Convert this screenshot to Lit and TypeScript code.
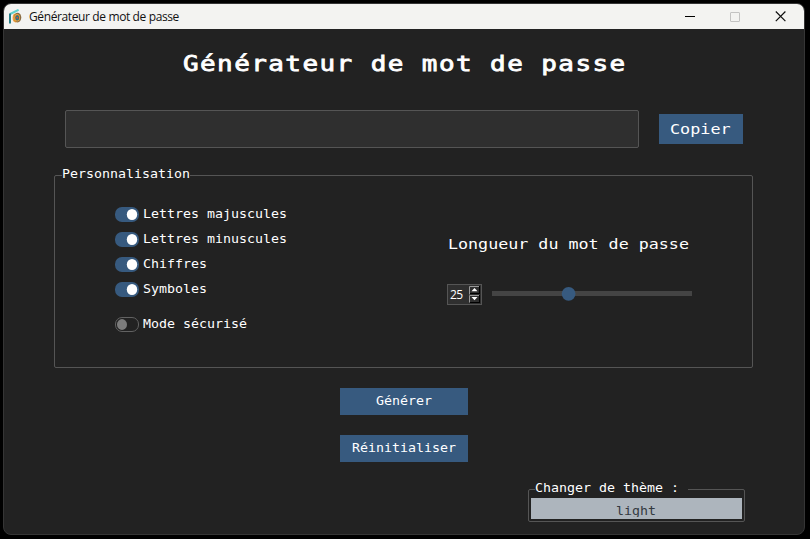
import { LitElement, html, css } from "lit";
import { customElement, property } from "lit/decorators.js";
import { styleMap } from "lit/directives/style-map.js";

const ADVANCE = 0.602;

/** One line of monospaced text with a chosen glyph size, column pitch and glyph stretch. */
@customElement("mono-text")
class MonoText extends LitElement {
  @property() text = "";
  @property({ type: Number }) size = 12.8;
  @property({ type: Number }) pitch = 8;
  @property({ type: Number }) stretch = 0;

  static styles = css`
    :host { display: block; flex: none; }
    .box { height: 20px; line-height: 20px; }
    .glyphs {
      display: block; width: max-content; white-space: pre; transform-origin: 0 50%;
      font-family: "DejaVu Sans Mono", monospace; 
    }
  `;

  render() {
    const scale = this.stretch || this.pitch / (this.size * ADVANCE);
    const spacing = this.pitch / scale - this.size * ADVANCE;
    return html`<div class="box" style=${styleMap({ width: `${this.text.length * this.pitch}px` })}>
      <span class="glyphs" style=${styleMap({
        fontSize: `${this.size}px`,
        letterSpacing: `${spacing}px`,
        transform: `scaleX(${scale})`,
      })}>${this.text}</span>
    </div>`;
  }
}

@customElement("toggle-row")
class ToggleRow extends LitElement {
  @property() label = "";
  @property({ type: Boolean }) on = false;

  static styles = css`
    :host { display: flex; align-items: center; height: 15px; gap: 3.5px; }
    svg { display: block; flex: none; }
    mono-text { margin-top: -2px; }
  `;

  render() {
    return html`
      <svg width="24" height="15" viewBox="0 0 24 15">
        ${this.on
          ? html`<svg width="24" height="15"><rect width="24" height="15" rx="7" fill="#375a7f"/><ellipse cx="17" cy="7.5" rx="5.2" ry="5.6" fill="#fff"/></svg>`
          : html`<svg width="24" height="15"><rect x=".5" y=".5" width="23" height="14" rx="6.5" fill="#222" stroke="#626262"/><ellipse cx="7" cy="7.5" rx="5" ry="5.4" fill="#7c7c7c"/></svg>`}
      </svg>
      <mono-text text=${this.label}></mono-text>`;
  }
}

@customElement("app-root")
class AppRoot extends LitElement {
  static styles = css`
    :host { display: block; width: 810px; height: 539px; background: #000; overflow: hidden; }
    * { box-sizing: border-box; }
    svg { display: block; flex: none; }
    .desktop { height: 539px; padding: 3px 5px 4px 3px; }
    .window {
      display: flex; flex-direction: column; height: 532px; background: #222;
      border: 1px solid #353535; border-radius: 8px; overflow: hidden; color: #fff;
    }
    .bar { display: flex; align-items: center; height: 25px; flex: none; background: #f3f3f1; padding: 0 18px 0 5px; }
    .caption { margin-left: 5px; flex: 1; color: #111; font: 12px/24px "Open Sans", sans-serif; letter-spacing: -0.38px; white-space: nowrap; }
    .controls { display: flex; align-items: center; gap: 35px; }
    .content { display: flex; flex-direction: column; padding: 25px 51px 0 50px; }
    .title { align-self: center; -webkit-text-stroke: 0.8px #fff; margin-left: 2px; }
    .output { display: flex; align-items: center; height: 38px; margin: 36px 10px 0 11px; gap: 20px; }
    .field { width: 574px; height: 38px; background: #2f2f2f; border: 1px solid #555; border-radius: 2px; }
    .button { display: flex; justify-content: center; align-items: center; background: #375a7f; }
    .copy { width: 84px; height: 30px; }
    .copy mono-text { margin-right: 1px; }
    .frame { position: relative; border: 1px solid #555; border-radius: 2px; }
    .legend { position: absolute; left: 7px; background: #222; }
    .legend.main { top: -12px; }
    .options { display: flex; width: 699px; height: 193px; margin-top: 27px; padding-left: 60px; }
    .toggles { display: flex; flex-direction: column; gap: 10px; padding-top: 31px; width: 332px; }
    .toggles .secure { margin-top: 10px; }
    .length { padding-top: 58px; }
    .length mono-text { margin-left: 1px; }
    .controls-row { display: flex; align-items: center; gap: 10px; margin-top: 30px; }
    .slider { margin-bottom: 1px; }
    .spin { display: flex; align-items: center; justify-content: space-between; width: 35px; height: 21px; border: 1px solid #555; background: #2f2f2f; padding: 0 1px 0 2px; }
    .number { font: 12px/19px "Open Sans", sans-serif; letter-spacing: -0.7px; }
    .actions { display: flex; flex-direction: column; align-items: center; gap: 20px; margin-top: 20px; }
    .action { width: 128px; height: 27px; }
    .action mono-text { margin-top: -2px; }
    .theme { align-self: flex-end; width: 217px; height: 33px; margin: 27px 8px 0 0; padding: 8px 2px 2px; }
    .theme .legend { top: -12px; left: 6px; width: 153px; }
    .choice { display: flex; justify-content: center; height: 21px; overflow: hidden; background: #adb5bd; color: #343a40; padding: 3px 2px 0 0; }
    .clip { height: 16px; overflow: hidden; }
  `;

  render() {
    return html`<div class="desktop"><div class="window">
      <div class="bar">
        <svg width="15" height="16" viewBox="0 0 15 16">
          <path d="M1.2 5L9.6 .8" fill="none" stroke="#5fd0cc" stroke-width="2"/>
          <path d="M1 4.5v10" stroke="#28808a" stroke-width="2"/>
          <ellipse cx="6.8" cy="9" rx="3.2" ry="4.4" fill="#efa03c"/>
          <ellipse cx="8.6" cy="8.6" rx="3.7" ry="4.8" fill="#8a6c43"/>
          <ellipse cx="8" cy="8.8" rx="2.9" ry="3.8" fill="#f0a23c"/>
          <ellipse cx="8.2" cy="8.8" rx="2" ry="2.7" fill="#2b7580"/>
          <circle cx="8.2" cy="8.8" r="1" fill="#d34a32"/>
        </svg>
        <span class="caption">Générateur de mot de passe</span>
        <div class="controls">
          <svg width="10" height="10"><path d="M0 4.5h10" stroke="#000"/></svg>
          <svg width="10" height="10"><rect x=".5" y=".5" width="9" height="9" rx=".5" fill="none" stroke="#c3c3c2"/></svg>
          <svg width="11" height="11"><path d="M.8 .5l9.6 9.6M10.4 .5l-9.6 9.6" stroke="#111" stroke-width="1.2"/></svg>
        </div>
      </div>
      <div class="content">
        <mono-text class="title" text="Générateur de mot de passe" size="22" pitch="17.06" stretch="1.18"></mono-text>
        <div class="output">
          <div class="field"></div>
          <div class="button copy"><mono-text text="Copier" size="14.8" pitch="10.1"></mono-text></div>
        </div>
        <div class="frame options">
          <mono-text class="legend main" text="Personnalisation"></mono-text>
          <div class="toggles">
            ${["Lettres majuscules", "Lettres minuscules", "Chiffres", "Symboles"].map(
              (label) => html`<toggle-row .label=${label} on></toggle-row>`
            )}
            <toggle-row class="secure" label="Mode sécurisé"></toggle-row>
          </div>
          <div class="length">
            <mono-text text="Longueur du mot de passe" size="14.8" pitch="10.04"></mono-text>
            <div class="controls-row">
              <div class="spin">
                <span class="number">25</span>
                <svg width="11" height="17" viewBox="0 0 11 17">
                  <path d="M0 8V0h11M0 16V9h11" transform="translate(.5 .5)" fill="none" stroke="#999"/>
                  <path d="M1 7.5h10M10.5 0v8M1 16.5h10M10.5 9v8" stroke="#000"/>
                  <path d="M2.5 5.2l3-3.2 3 3.2zM2.5 11h6l-3 3.2z" fill="#fff"/>
                </svg>
              </div>
              <svg class="slider" width="200" height="16" viewBox="0 0 200 16">
                <rect y="5" width="200" height="5" fill="#444"/>
                <circle cx="76.6" cy="7.8" r="6.9" fill="#375a7f"/>
              </svg>
            </div>
          </div>
        </div>
        <div class="actions">
          <div class="button action"><mono-text text="Générer"></mono-text></div>
          <div class="button action"><mono-text text="Réinitialiser"></mono-text></div>
        </div>
        <div class="frame theme">
          <mono-text class="legend" text="Changer de thème :"></mono-text>
          <div class="choice"><div class="clip"><mono-text text="light"></mono-text></div></div>
        </div>
      </div>
    </div></div>`;
  }
}
